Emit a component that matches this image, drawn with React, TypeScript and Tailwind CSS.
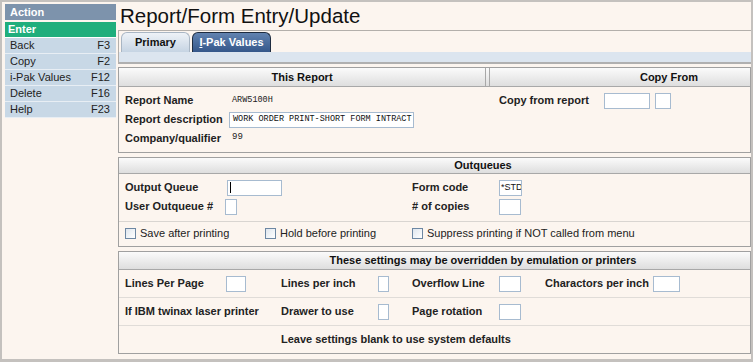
import React from "react";

const F = { fontFamily: '"Liberation Sans", Arial, sans-serif' } as React.CSSProperties;
const M = { fontFamily: '"Liberation Mono", "DejaVu Sans Mono", monospace' } as React.CSSProperties;

function Inp({ w, v, mono, caret }: { w: string; v?: string; mono?: boolean; caret?: boolean }) {
  return (
    <div
      className={`${w} h-[16px] bg-white border border-[#a7bbd0] flex items-center px-[1px] ${mono ? "text-[8.5px] pl-[3px]" : "text-[9px]"} leading-none text-[#111] overflow-hidden whitespace-nowrap`}
      style={mono ? M : F}
    >
      {caret ? <span className="inline-block w-px h-[11px] ml-[1px] bg-black" /> : v}
    </div>
  );
}

function Cb({ label }: { label: string }) {
  return (
    <div className="flex items-center gap-[4px]">
      <div className="w-[11px] h-[11px] border border-[#6d87a3] bg-gradient-to-br from-[#dfe6ee] to-white" />
      <span className="text-[11px] text-[#222]">{label}</span>
    </div>
  );
}

function Header({ children, h }: { children: React.ReactNode; h: string }) {
  return (
    <div className={`${h} bg-gradient-to-b from-[#fbfbfb] to-[#dedede] border-b border-[#a8a8a8] flex items-center text-[11px] font-bold text-[#111]`}>
      {children}
    </div>
  );
}

export default function App() {
  const side = [
    ["Back", "F3"],
    ["Copy", "F2"],
    ["i-Pak Values", "F12"],
    ["Delete", "F16"],
    ["Help", "F23"],
  ];
  return (
    <div
      className="w-[753px] h-[362px] bg-[#fcf5ef] border-t-2 border-l-2 border-r-2 border-b-[3px] border-[#c4c1be] flex overflow-hidden"
      style={F}
    >
      {/* Sidebar */}
      <div className="w-[111px] ml-[3px] mt-[2px] flex flex-col shrink-0">
        <div className="h-[16px] bg-[#7d93ac] text-white font-bold text-[11px] flex items-center pl-[5px]">Action</div>
        <div className="h-[16px] mt-[2px] bg-[#1fae7c] text-white font-bold text-[11px] flex items-center pl-[3px] border-b border-white">Enter</div>
        {side.map(([a, b]) => (
          <div key={a} className="h-[16px] bg-[#c8d8e6] border-b border-[#e8eef4] flex items-center justify-between pl-[5px] pr-[6px] text-[11px] text-[#222]">
            <span>{a}</span>
            <span>{b}</span>
          </div>
        ))}
      </div>

      {/* Main */}
      <div className="ml-[2px] w-[633px] flex flex-col">
        <div className="h-[28px] pl-[2px] text-[20.5px] leading-[28px] text-[#111] whitespace-nowrap">Report/Form Entry/Update</div>

        {/* Tabs */}
        <div className="border-t border-l border-[#b3afab]">
          <div className="h-[21px] flex items-end pl-[2px] gap-[2px]">
            <div className="w-[69px] h-[20px] rounded-t-[6px] border border-b-0 border-[#a9b6c4] bg-gradient-to-b from-[#eef2f7] to-[#c6d4e3] flex items-center justify-center text-[11px] font-bold text-[#111]">
              Primary
            </div>
            <div className="w-[79px] h-[20px] rounded-t-[6px] border border-b-0 border-[#1e2c40] bg-gradient-to-b from-[#6283b0] to-[#35578a] flex items-center justify-center text-[11px] font-bold text-white">
              <span><span className="underline">I</span>-Pak Values</span>
            </div>
          </div>
          <div className="h-[12px] bg-[#dce5ef] border-b-2 border-[#b0b0b0]" />
        </div>

        {/* This Report */}
        <div className="mt-[3px] h-[86px] border border-[#a0a0a0]">
          <Header h="h-[19px]">
            <div className="w-[366px] text-center">This Report</div>
            <div className="w-[5px] h-full border-l border-r border-[#a8a8a8]" />
            <div className="flex-1 text-right pr-[52px]">Copy From</div>
          </Header>
          <div className="flex pt-[4px]">
            <div className="w-[366px] pl-[6px] flex flex-col">
              <div className="h-[19px] flex items-center">
                <span className="w-[104px] text-[11px] font-bold text-[#222]">Report Name</span>
                <span className="text-[8.5px] text-[#222] pl-[3px]" style={M}>ARW5100H</span>
              </div>
              <div className="h-[19px] flex items-center">
                <span className="w-[104px] text-[11px] font-bold text-[#222]">Report description</span>
                <Inp w="w-[185px]" v="WORK ORDER PRINT-SHORT FORM INTRACT" mono />
              </div>
              <div className="h-[18px] flex items-center">
                <span className="w-[107px] text-[11px] font-bold text-[#222]">Company/qualifier</span>
                <span className="text-[9px] text-[#222]" style={M}>99</span>
              </div>
            </div>
            <div className="pl-[14px] flex flex-col">
              <div className="h-[19px] flex items-center">
                <span className="w-[105px] text-[11px] font-bold text-[#222]">Copy from report</span>
                <Inp w="w-[46px]" />
                <div className="w-[5px]" />
                <Inp w="w-[16px]" />
              </div>
            </div>
          </div>
        </div>

        {/* Outqueues */}
        <div className="mt-[4px] h-[90px] border border-[#a0a0a0]">
          <Header h="h-[16px]">
            <div className="flex-1 text-center pl-[97px]">Outqueues</div>
          </Header>
          <div className="flex pt-[4px] pb-[5px] border-b border-[#d9d5d1]">
            <div className="w-[293px] pl-[6px] flex flex-col">
              <div className="h-[19px] flex items-center">
                <span className="w-[102px] text-[11px] font-bold text-[#222]">Output Queue</span>
                <Inp w="w-[55px]" caret />
              </div>
              <div className="h-[19px] flex items-center">
                <span className="w-[100px] text-[11px] font-bold text-[#222]">User Outqueue #</span>
                <Inp w="w-[12px]" />
              </div>
            </div>
            <div className="flex flex-col">
              <div className="h-[19px] flex items-center">
                <span className="w-[87px] text-[11px] font-bold text-[#222]">Form code</span>
                <Inp w="w-[23px]" v="*STD" />
              </div>
              <div className="h-[19px] flex items-center">
                <span className="w-[87px] text-[11px] font-bold text-[#222]"># of copies</span>
                <Inp w="w-[22px]" />
              </div>
            </div>
          </div>
          <div className="h-[23px] flex items-center pl-[6px]">
            <div className="w-[140px]"><Cb label="Save after printing" /></div>
            <div className="w-[147px]"><Cb label="Hold before printing" /></div>
            <Cb label="Suppress printing if NOT called from menu" />
          </div>
        </div>

        {/* Settings */}
        <div className="mt-[4px] h-[103px] border border-[#a0a0a0]">
          <Header h="h-[18px]">
            <div className="flex-1 text-center pl-[97px]">These settings may be overridden by emulation or printers</div>
          </Header>
          <div className="h-[28px] flex items-center pl-[6px] border-b border-[#e0dcd8] text-[11px] font-bold text-[#222]">
            <div className="w-[156px] flex items-center"><span className="w-[101px]">Lines Per Page</span><Inp w="w-[20px]" /></div>
            <div className="w-[131px] flex items-center"><span className="w-[97px]">Lines per inch</span><Inp w="w-[11px]" /></div>
            <div className="w-[133px] flex items-center"><span className="w-[87px]">Overflow Line</span><Inp w="w-[22px]" /></div>
            <div className="flex items-center"><span className="w-[108px]">Charactors per inch</span><Inp w="w-[27px]" /></div>
          </div>
          <div className="h-[28px] flex items-center pl-[6px] border-b border-[#e0dcd8] text-[11px] font-bold text-[#222]">
            <div className="w-[156px] flex items-center"><span>If IBM twinax laser printer</span></div>
            <div className="w-[131px] flex items-center"><span className="w-[97px]">Drawer to use</span><Inp w="w-[11px]" /></div>
            <div className="w-[133px] flex items-center"><span className="w-[87px]">Page rotation</span><Inp w="w-[22px]" /></div>
          </div>
          <div className="h-[27px] flex items-center pl-[162px] text-[11px] font-bold text-[#222]">
            Leave settings blank to use system defaults
          </div>
        </div>
      </div>
    </div>
  );
}
